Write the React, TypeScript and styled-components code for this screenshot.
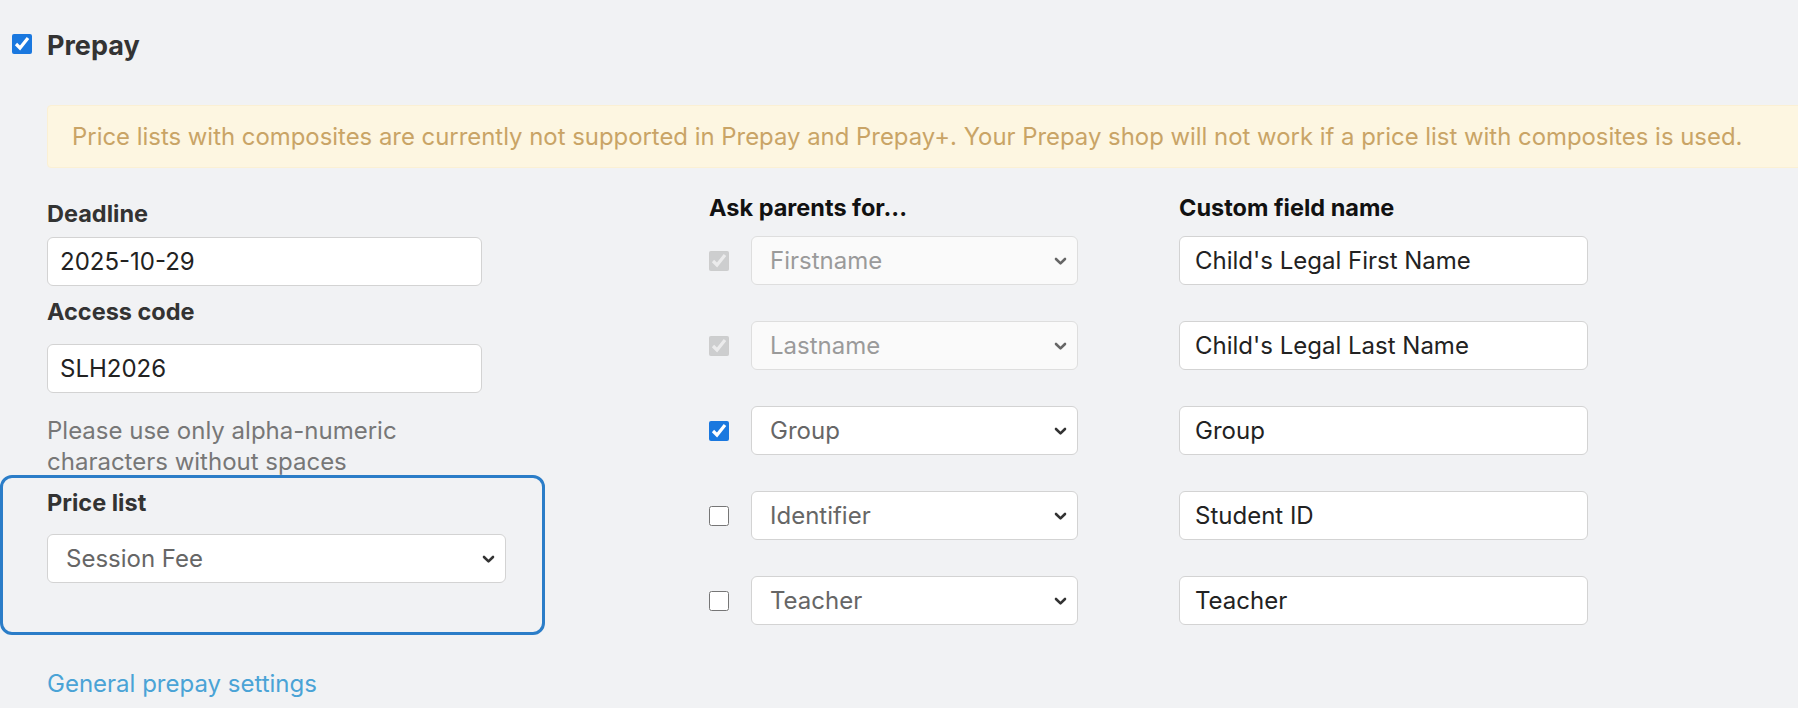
import React from "react";
import styled, { createGlobalStyle } from "styled-components";

const Global = createGlobalStyle`
  html, body { margin: 0; padding: 0; background: #f1f2f4; }
  body { font-family: Inter, "Noto Sans", sans-serif; overflow: hidden; }
  * { box-sizing: border-box; }
`;

const Page = styled.div`
  width: 1798px;
  height: 708px;
  overflow: hidden;
  padding: 34px 0 0 12px;
`;

const Header = styled.label`
  display: flex;
  align-items: center;
  gap: 15px;
  height: 20px;
`;

const Check = styled.input.attrs({ type: "checkbox" })`
  width: 20px;
  height: 20px;
  margin: 0;
  flex: none;
  accent-color: #1a78df;
`;

const Title = styled.span`
  font-size: 27px;
  font-weight: 700;
  color: #333;
  line-height: 20px;
  padding-top: 3px;
`;

const Body = styled.div`
  margin-left: 35px;
`;

const Warning = styled.div`
  margin-top: 51px;
  width: 1800px;
  height: 63px;
  background: #fdf6e1;
  border: 1px solid #fbf0d4;
  border-radius: 4px;
  padding: 0 24px;
  display: flex;
  align-items: center;
  font-size: 23.9px;
  color: #c9a466;
  white-space: nowrap;
`;

const Grid = styled.div`
  display: grid;
  grid-template-columns: 662px 470px 1fr;
  align-items: start;
`;

const Col = styled.div`
  display: flex;
  flex-direction: column;
`;

const Label = styled.div<{ $mt?: number; $mb?: number }>`
  font-size: 23.5px;
  font-weight: 700;
  color: #333;
  line-height: 31px;
  margin-top: ${(p) => p.$mt ?? 0}px;
  margin-bottom: ${(p) => p.$mb ?? 0}px;
`;

const Heading = styled.div`
  font-size: 23.5px;
  font-weight: 700;
  color: #111;
  line-height: 31px;
  margin-top: 24px;
  margin-bottom: 13px;
`;

const TextInput = styled.input<{ $w: number; $pl: number }>`
  width: ${(p) => p.$w}px;
  height: 49px;
  border: 1px solid #d3d3d3;
  border-radius: 6px;
  background: #fff;
  padding: 0 0 0 ${(p) => p.$pl}px;
  font-family: Inter, "Noto Sans", sans-serif;
  font-size: 24px;
  color: #222;
  outline: none;
`;

const Help = styled.div`
  width: 435px;
  margin-top: 22px;
  font-size: 24px;
  line-height: 31px;
  color: #777;
`;

const PriceBox = styled.div`
  margin-left: -47px;
  margin-top: -2px;
  width: 545px;
  height: 160px;
  border: 3px solid #2b7dc8;
  border-radius: 12px;
  padding: 9px 0 0 44px;
`;

const SelectWrap = styled.div<{ $w: number }>`
  position: relative;
  width: ${(p) => p.$w}px;
  height: 49px;
  flex: none;
`;

const Select = styled.select<{ $disabled?: boolean }>`
  appearance: none;
  width: 100%;
  height: 100%;
  border: 1px solid ${(p) => (p.$disabled ? "#dedede" : "#d3d3d3")};
  border-radius: 6px;
  background: ${(p) => (p.$disabled ? "#fafafa" : "#fff")};
  padding: 0 0 0 18px;
  font-family: Inter, "Noto Sans", sans-serif;
  font-size: 24px;
  color: ${(p) => (p.$disabled ? "#9a9a9a" : "#666")};
  outline: none;
  opacity: 1;
`;

const Chevron = styled.svg<{ $disabled?: boolean }>`
  position: absolute;
  right: 11px;
  top: 50%;
  margin-top: -4px;
  width: 13px;
  height: 9px;
  pointer-events: none;
  color: ${(p) => (p.$disabled ? "#666" : "#333")};
`;

const Link = styled.a`
  display: block;
  margin-top: 33px;
  font-size: 24px;
  line-height: 31px;
  color: #4aa3d6;
  text-decoration: none;
`;

const AskRow = styled.div`
  display: flex;
  align-items: center;
  gap: 22px;
  height: 49px;
  margin-bottom: 36px;
`;

const FieldRow = styled.div`
  height: 49px;
  margin-bottom: 36px;
`;

const SelectBox: React.FC<{ w: number; value: string; disabled?: boolean }> = ({ w, value, disabled }) => (
  <SelectWrap $w={w}>
    <Select $disabled={disabled} defaultValue={value}>
      <option>{value}</option>
    </Select>
    <Chevron $disabled={disabled} viewBox="0 0 13 9" fill="none">
      <path d="M2 2 L6.5 6.4 L11 2" stroke="currentColor" strokeWidth="2.6" strokeLinecap="round" strokeLinejoin="round" />
    </Chevron>
  </SelectWrap>
);

const asks = [
  { name: "Firstname", checked: true, disabled: true, field: "Child's Legal First Name" },
  { name: "Lastname", checked: true, disabled: true, field: "Child's Legal Last Name" },
  { name: "Group", checked: true, disabled: false, field: "Group" },
  { name: "Identifier", checked: false, disabled: false, field: "Student ID" },
  { name: "Teacher", checked: false, disabled: false, field: "Teacher" },
];

export default function App() {
  return (
    <Page>
      <Global />
      <Header>
        <Check defaultChecked />
        <Title>Prepay</Title>
      </Header>
      <Body>
        <Warning>
          Price lists with composites are currently not supported in Prepay and Prepay+. Your Prepay shop will not work if a price list with composites is used.
        </Warning>
        <Grid>
          <Col>
            <Label $mt={30} $mb={8}>Deadline</Label>
            <TextInput $w={435} $pl={12} defaultValue="2025-10-29" />
            <Label $mt={10} $mb={17}>Access code</Label>
            <TextInput $w={435} $pl={12} defaultValue="SLH2026" />
            <Help>Please use only alpha-numeric characters without spaces</Help>
            <PriceBox>
              <Label $mb={16}>Price list</Label>
              <SelectBox w={459} value="Session Fee" />
            </PriceBox>
            <Link href="#">General prepay settings</Link>
          </Col>
          <Col>
            <Heading>Ask parents for...</Heading>
            {asks.map((a) => (
              <AskRow key={a.name}>
                <Check defaultChecked={a.checked} disabled={a.disabled} />
                <SelectBox w={327} value={a.name} disabled={a.disabled} />
              </AskRow>
            ))}
          </Col>
          <Col>
            <Heading>Custom field name</Heading>
            {asks.map((a) => (
              <FieldRow key={a.name}>
                <TextInput $w={409} $pl={15} defaultValue={a.field} />
              </FieldRow>
            ))}
          </Col>
        </Grid>
      </Body>
    </Page>
  );
}
